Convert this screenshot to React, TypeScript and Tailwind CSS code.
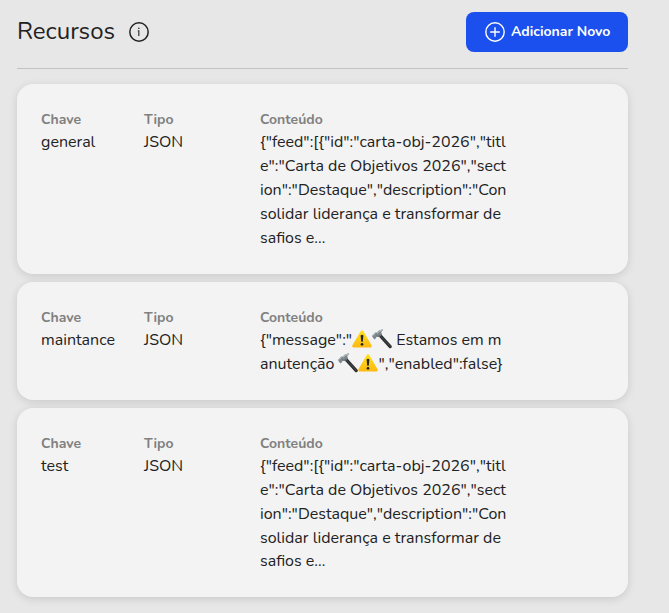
import React from "react";

function Warning() {
  return (
    <svg viewBox="0 0 20 18" className="inline-block h-[18px] w-5 align-[-3px]">
      <defs>
        <linearGradient id="warn" x1="0" y1="0" x2="0" y2="1">
          <stop offset="0" stopColor="#ffe11c" />
          <stop offset="1" stopColor="#fdb913" />
        </linearGradient>
      </defs>
      <path d="M8.8 1q1.2-1.5 2.4 0l8.4 14.3q.8 2-1.2 2.2H1.6q-2-.2-1.2-2.2Z" fill="url(#warn)" />
      <path d="M8.6 5.4q1.4-1.1 2.8 0l-.6 6q-.8.8-1.6 0Z" fill="#242424" />
      <circle cx="10" cy="14.3" r="1.35" fill="#242424" />
    </svg>
  );
}

function Hammer() {
  return (
    <svg viewBox="0 0 20 20" className="inline-block h-5 w-5 align-[-4px]">
      <path d="m6.6 7.2 2.6-1.9 10.4 11.5q.6 1.5-.6 2.3-1.1.6-2-.3Z" fill="#2b2e31" />
      <path d="m8.2 6.6 10.2 11" stroke="#565c61" strokeWidth=".6" />
      <path d="M.4 6.2 3.2 3.6l1.2.2Q6.4.9 10.4.3l.7.8-1.9 1.9.9 2.4-3.1 2.7-1.8-1.2-.9 1-.1 1.1L2.4 10.5.3 7.8Z" fill="#7d878e" />
      <path d="M1 6.3 3.4 4.4M5 4.4Q7 1.9 10 1.1" stroke="#d5dde1" strokeWidth=".8" fill="none" />
      <path d="m4.1 6.9 2 .6 2.3-1.8" stroke="#59636a" strokeWidth=".9" fill="none" />
    </svg>
  );
}

function Label({ children }: { children: React.ReactNode }) {
  return <div className="h-[21px] text-[14px] leading-[22px] font-bold text-[#808080]">{children}</div>;
}

function Card({ name, children }: { name: string; children: React.ReactNode }) {
  return (
    <section className="flex rounded-2xl bg-[#f3f3f3] px-6 pt-[25px] pb-6 text-base leading-6 shadow-[0_2px_8px_rgba(0,0,0,0.13)]">
      <div className="w-[103px]">
        <Label>Chave</Label>
        <div>{name}</div>
      </div>
      <div className="w-[116px]">
        <Label>Tipo</Label>
        <div>JSON</div>
      </div>
      <div className="whitespace-nowrap">
        <Label>Conteúdo</Label>
        {children}
      </div>
    </section>
  );
}

function Feed({ tight = false }: { tight?: boolean }) {
  return (
    <>
      <div>{'{"feed":[{"id":"carta-obj-2026","titl'}</div>
      <div>{'e":"Carta de Objetivos 2026","sect'}</div>
      <div>{'ion":"Destaque","description":"Con'}</div>
      <div>solidar liderança e transformar de</div>
      <div className={tight ? "-mt-px" : ""}>safios e...</div>
    </>
  );
}

export default function App() {
  return (
    <main className="h-[613px] w-[669px] overflow-hidden bg-[#e7e7e7] pr-[41px] pl-[17px] font-['Nunito','Lato',sans-serif] text-[#222] antialiased">
      <header className="flex h-[69px] items-start justify-between border-b border-[#c2c2c2] pt-3">
        <div className="flex h-10 items-center gap-[14px]">
          <h1 className="pb-0.5 text-2xl leading-9">Recursos</h1>
          <svg viewBox="0 0 20 20" className="h-5 w-5" fill="none" stroke="#222" strokeWidth="1.5">
            <circle cx="10" cy="10" r="9.2" />
            <path d="M8.8 8.9h1V14" strokeWidth="1.3" strokeOpacity=".85" />
            <circle cx="9.8" cy="6.2" r=".8" fill="#222" stroke="none" />
          </svg>
        </div>
        <button className="flex h-10 w-[162px] items-center gap-[6px] rounded-lg bg-[#1b50ee] pl-[19px] text-[14px] font-bold text-white">
          <svg viewBox="0 0 20 20" className="h-5 w-5" fill="none" stroke="white" strokeWidth="1.4">
            <circle cx="10" cy="10" r="9.2" />
            <path d="M10 5.2v9.6M5.2 10h9.6" />
          </svg>
          <span className="pb-0.5">Adicionar Novo</span>
        </button>
      </header>
      <div className="flex flex-col gap-2 pt-[15px]">
        <Card name="general"><Feed /></Card>
        <Card name="maintance">
          <div className="h-6">{'{"message":"'}<Warning /><Hammer />{' Estamos em m'}</div>
          <div className="h-6">anutenção <span className="-ml-px"><Hammer /><Warning /></span><span className="ml-px">{'","enabled":false}'}</span></div>
        </Card>
        <Card name="test"><Feed tight /></Card>
      </div>
    </main>
  );
}
